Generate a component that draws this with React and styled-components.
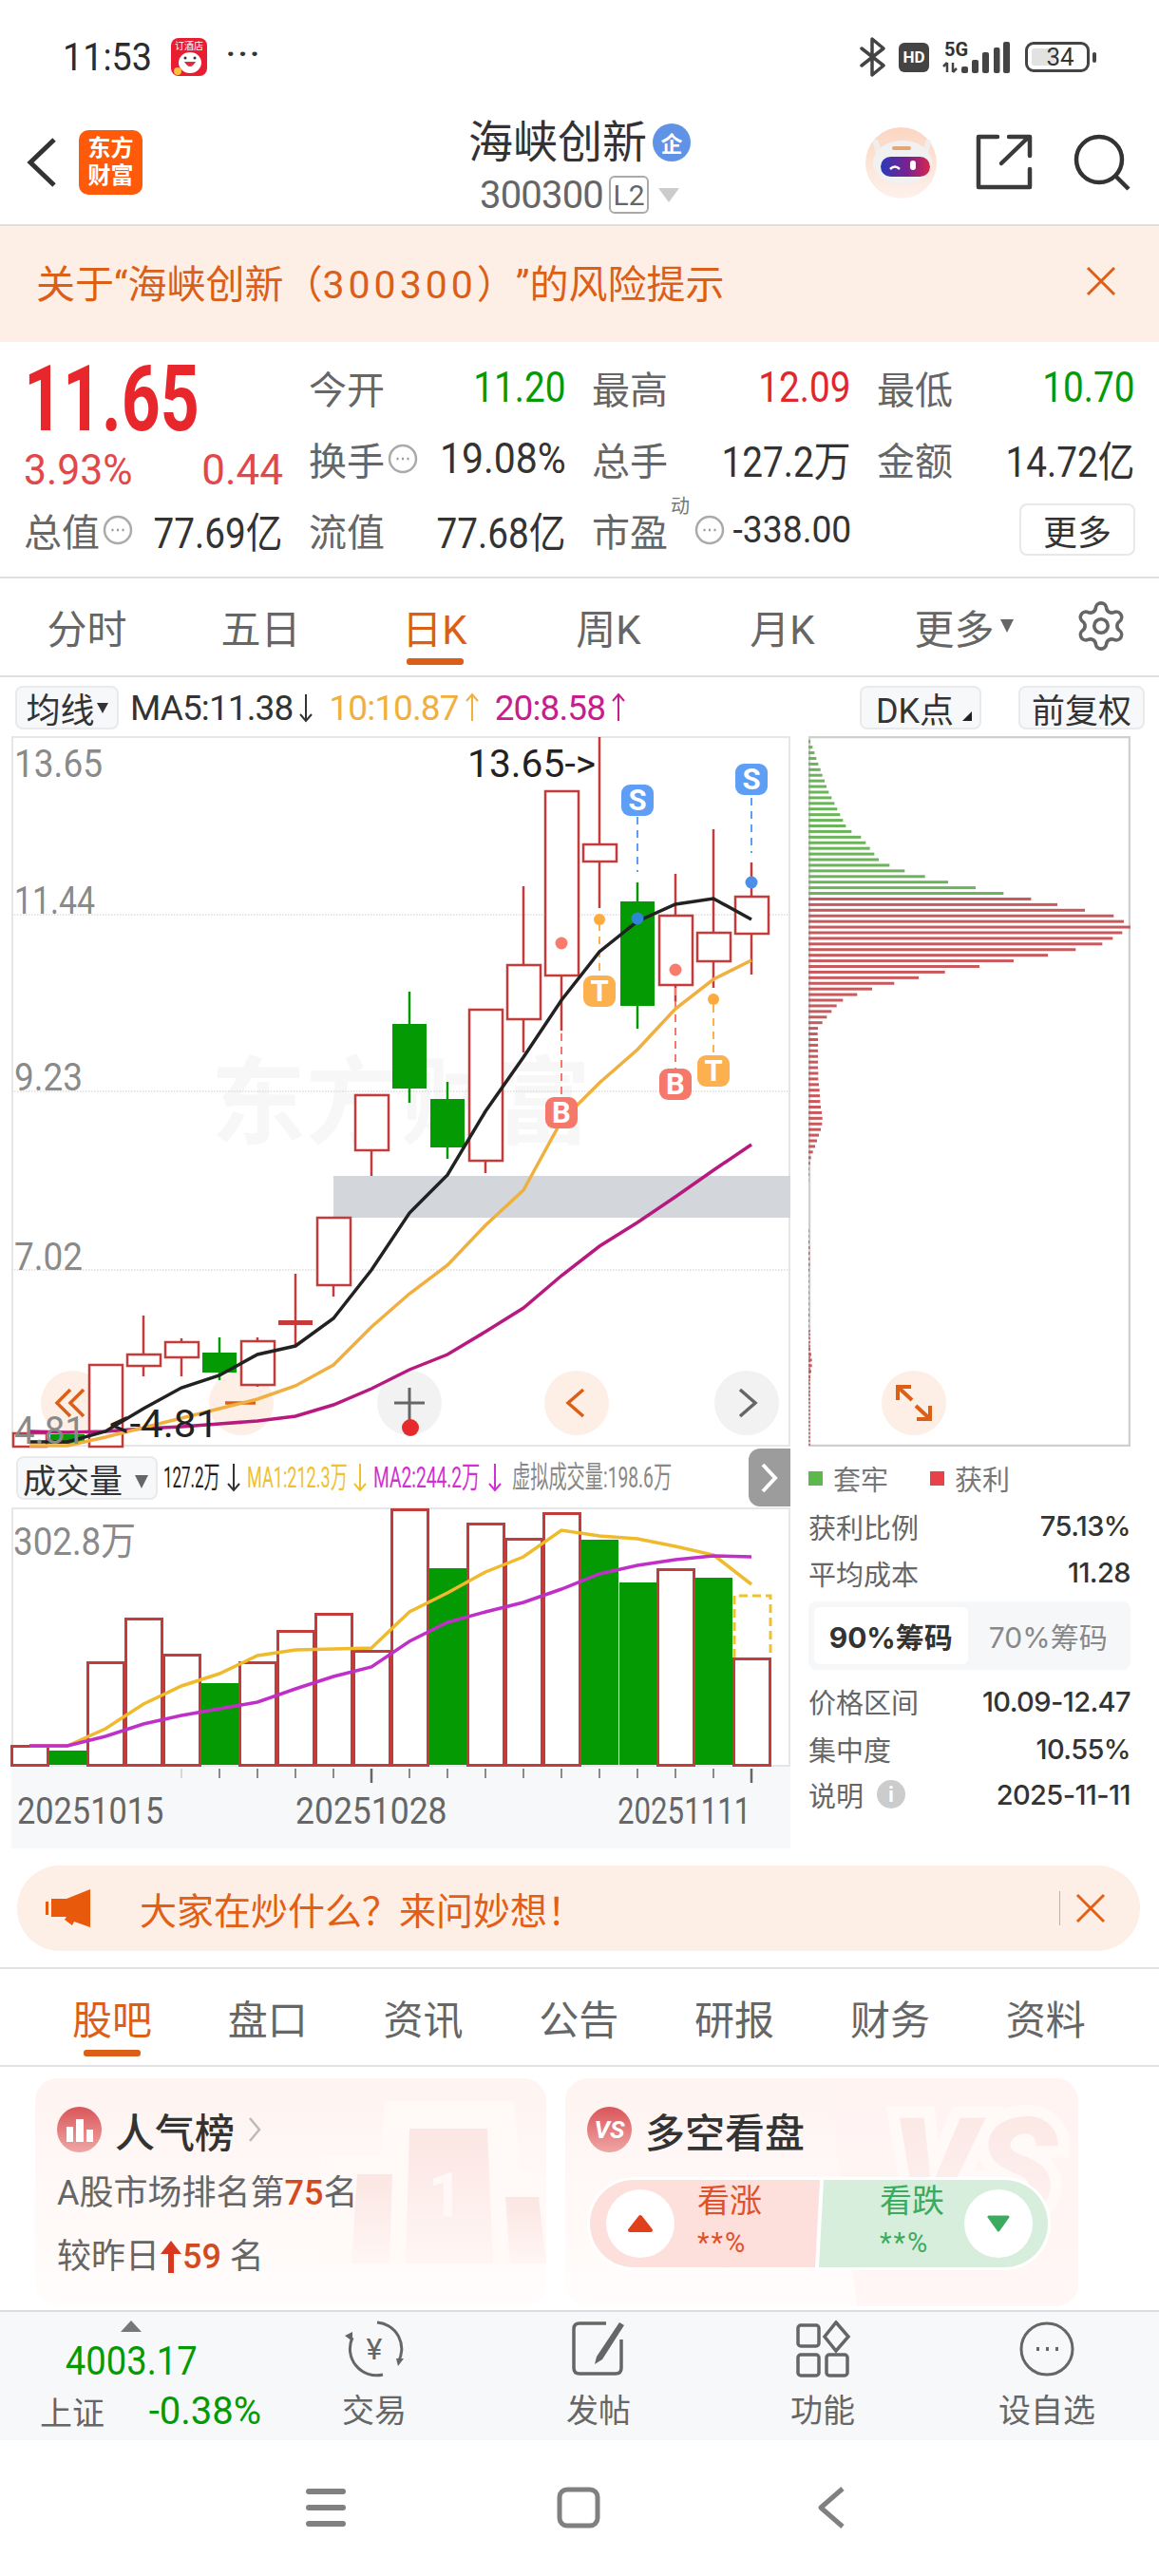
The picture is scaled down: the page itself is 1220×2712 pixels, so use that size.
import React from 'react';
import styled, { createGlobalStyle } from 'styled-components';
import { Settings } from 'lucide-react';

const SANS = 'Roboto, "Noto Sans CJK SC", sans-serif';
const ORANGE = '#dc5f17';
const RED = '#c33b3b';
const GREEN = '#049a04';

const Global = createGlobalStyle`
  html, body { margin: 0; padding: 0; background: #fff; }
  body { font-family: ${SANS}; color: #333; }
  * { box-sizing: border-box; }
`;

const Page = styled.div`
  width: 1220px;
  height: 2712px;
  overflow: hidden;
  background: #fff;
`;

/* status bar */
const StatusBar = styled.div`
  height: 100px;
  padding: 20px 65px 0 66px;
  display: flex;
  align-items: center;
`;
const Clock = styled.span`
  font-size: 41px;
  color: #2c2c2c;
  width: 114px;
  display: inline-block;
  transform: scaleX(.92);
  transform-origin: left center;
`;
const Dots = styled.span`
  margin-left: 20px;
  font-size: 32px;
  letter-spacing: 3px;
  font-weight: 700;
  line-height: 1;
  margin-top: -8px;
`;
const StatusRight = styled.div`
  margin-left: auto;
  display: flex;
  align-items: center;
  gap: 14px;
`;
const HdTag = styled.span`
  width: 32px;
  height: 31px;
  border-radius: 6px;
  background: #444;
  color: #fff;
  font-size: 17px;
  font-weight: 700;
  display: flex;
  align-items: center;
  justify-content: center;
`;
const Battery = styled.div`
  width: 68px;
  height: 32px;
  border: 3px solid #444;
  border-radius: 9px;
  display: flex;
  align-items: center;
  justify-content: center;
  font-size: 26px;
  color: #333;
  position: relative;
  margin: 0 8px 0 1px;
  padding-left: 6px;
  &::before {
    content: '';
    position: absolute;
    left: 4px;
    top: 4px;
    bottom: 4px;
    width: 25px;
    border-radius: 3px;
    background: #e2e2e2;
  }
  span { position: relative; }
  &::after {
    content: '';
    position: absolute;
    right: -10px;
    top: 8px;
    width: 4px;
    height: 11px;
    border-radius: 2px;
    background: #444;
  }
`;
const SignalIcon = styled.svg`
  overflow: visible;
`;

/* header */
const Header = styled.div`
  height: 138px;
  border-bottom: 2px solid #dfdfdf;
  display: grid;
  grid-template-columns: 1fr auto 1fr;
`;
const HeaderLeft = styled.div`
  padding: 6px 0 0 28px;
  display: flex;
  align-items: center;
  gap: 23px;
`;
const Logo = styled.div`
  width: 67px;
  height: 68px;
  border-radius: 10px;
  background: #ff5a0a;
  color: #fff;
  font-size: 24px;
  font-weight: 700;
  line-height: 29px;
  text-align: center;
  padding-top: 5px;
`;
const HeaderMid = styled.div`
  display: flex;
  flex-direction: column;
  align-items: center;
  padding-top: 25px;
`;
const TitleRow = styled.div`
  display: flex;
  align-items: center;
  gap: 6px;
  height: 50px;
`;
const Title = styled.span`
  font-size: 47px;
  line-height: 50px;
  color: #333;
`;
const QiBadge = styled.span`
  width: 40px;
  height: 40px;
  border-radius: 50%;
  background: #6092e6;
  color: #fff;
  font-size: 23px;
  font-weight: 700;
  display: flex;
  align-items: center;
  justify-content: center;
`;
const CodeRow = styled.div`
  display: flex;
  align-items: center;
  margin-top: 10px;
  height: 40px;
  color: #666;
`;
const Code = styled.span`
  font-size: 40px;
  letter-spacing: -.8px;
`;
const L2Tag = styled.span`
  margin-left: 6px;
  width: 42px;
  height: 40px;
  border: 2px solid #aaa;
  border-radius: 6px;
  font-size: 30px;
  display: flex;
  align-items: center;
  justify-content: center;
`;
const Caret = styled.span`
  display: inline-block;
  border-left: ${p => p.$w / 2}px solid transparent;
  border-right: ${p => p.$w / 2}px solid transparent;
  border-top: ${p => p.$h}px solid ${p => p.$c};
  ${p => p.$up && `transform: rotate(180deg);`}
  margin-left: ${p => p.$ml || 0}px;
`;
const HeaderRight = styled.div`
  padding: 6px 30px 0 0;
  display: flex;
  align-items: center;
  justify-content: flex-end;
`;
const IconSlot = styled.span`
  display: flex;
  margin-left: ${p => p.$ml || 0}px;
`;

/* notice */
const Notice = styled.div`
  height: 122px;
  background: #fdeee6;
  display: flex;
  align-items: center;
  justify-content: space-between;
  padding: 0 45px 6px 38px;
  color: ${ORANGE};
  font-size: 41px;
  text-spacing-trim: space-all;
  i { font-style: normal; letter-spacing: 4px; }
`;

/* quote */
const Quote = styled.div`
  height: 249px;
  border-bottom: 2px solid #dfdfdf;
  padding: 10px 25px 0 25px;
  display: grid;
  grid-template-columns: 300px 298px 300px 1fr;
  grid-template-rows: repeat(3, 75px);
`;
const PriceBlock = styled.div`
  grid-row: 1 / 3;
  padding-right: 27px;
  display: flex;
  flex-direction: column;
`;
const Price = styled.div`
  height: 100px;
  line-height: 100px;
  font-size: 96px;
  font-weight: 700;
  color: #e8272c;
  transform: scaleX(.745);
  transform-origin: left center;
`;
const Change = styled.div`
  height: 50px;
  display: flex;
  align-items: center;
  justify-content: space-between;
`;
const Cell = styled.div`
  display: flex;
  align-items: center;
  justify-content: space-between;
  padding-right: ${p => p.$last ? 0 : 27}px;
`;
const Label = styled.span`
  font-size: 40px;
  color: #666;
  display: flex;
  align-items: center;
  white-space: nowrap;
  position: relative;
`;
const Num = styled.span`
  display: inline-block;
  font-size: ${p => p.$fs || 44}px;
  color: ${p => p.$c || '#333'};
  transform: scaleX(${p => p.$sx || .88});
  transform-origin: ${p => p.$left ? 'left' : 'right'} center;
  white-space: nowrap;
`;
const Dyn = styled.span`
  position: absolute;
  left: 83px;
  top: -12px;
  font-size: 20px;
  color: #777;
`;
const MoreBtn = styled.div`
  width: 122px;
  height: 55px;
  margin-left: auto;
  border: 2px solid #e8e8e8;
  border-radius: 8px;
  font-size: 36px;
  display: flex;
  align-items: center;
  justify-content: center;
`;

/* k tabs */
const KTabs = styled.div`
  height: 104px;
  border-bottom: 2px solid #dfdfdf;
  display: grid;
  grid-template-columns: repeat(6, 183px) 1fr;
  align-items: center;
  padding-bottom: 2px;
`;
const Tab = styled.div`
  height: 100%;
  display: flex;
  align-items: center;
  justify-content: center;
  font-size: ${p => p.$fs || 42}px;
  color: ${p => p.$on ? ORANGE : '#666'};
  position: relative;
  ${p => p.$on && `
    &::after {
      content: '';
      position: absolute;
      left: 50%;
      bottom: ${p.$bar}px;
      width: 60px;
      margin-left: -30px;
      height: 7px;
      border-radius: 3px;
      background: ${ORANGE};
    }
  `}
`;
const GearSlot = styled.div`
  display: flex;
  justify-content: center;
`;

/* indicators */
const IndBar = styled.div`
  height: 62px;
  padding: 2px 15px 0 16px;
  display: flex;
  align-items: center;
`;
const SoftBtn = styled.div`
  height: 46px;
  border: 2px solid #e9eaec;
  border-radius: 8px;
  background: #f7f8fa;
  display: flex;
  align-items: center;
  justify-content: center;
  position: relative;
  color: #333;
  font-size: ${p => p.$fs || 36}px;
  width: ${p => p.$w}px;
  margin-left: ${p => p.$ml || 0}px;
  flex: none;
`;
const MaText = styled.span`
  font-size: 37px;
  color: ${p => p.$c};
  white-space: nowrap;
  margin-left: ${p => p.$ml || 0}px;
  letter-spacing: -.9px;
`;
const CornerMark = styled.span`
  position: absolute;
  right: 8px;
  bottom: 7px;
  width: 0;
  height: 0;
  border-left: 10px solid transparent;
  border-bottom: 10px solid #222;
`;

/* chart area */
const Charts = styled.div`
  height: 1171px;
  display: flex;
  padding-left: 12px;
`;
const LeftCol = styled.div`
  width: 820px;
`;
const RightCol = styled.div`
  width: 339px;
  margin-left: 19px;
`;
const Panel = styled.div`
  width: 820px;
  height: ${p => p.$h}px;
  border: 2px solid #e6e6e6;
  svg { display: block; margin: -2px; overflow: visible; }
`;
const ChartText = styled.text`
  font-family: ${SANS};
  font-size: ${p => p.$fs || 41}px;
  fill: ${p => p.$c || '#8a8a8a'};
  font-weight: ${p => p.$w || 400};
  text-anchor: ${p => p.$a || 'start'};
`;
const VolHead = styled.div`
  height: 64px;
  display: flex;
  align-items: flex-start;
`;
const VolBtn = styled(SoftBtn)`
  width: 149px;
  margin: 10px 6px 0 5px;
  justify-content: flex-start;
  padding-left: 5px;
  font-size: 35px;
  span { position: absolute; right: 8px; top: 18px; }
`;
const Squeeze = styled.span`
  width: ${p => p.$w}px;
  flex: none;
  font-size: 32px;
  line-height: 64px;
  white-space: nowrap;
  color: ${p => p.$c};
  display: inline-block;
  transform: scaleX(${p => p.$sx});
  transform-origin: left center;
`;
const ArrowSlot = styled.span`
  display: flex;
  height: 64px;
  align-items: center;
  margin: 0 ${p => p.$mr || 7}px 0 7px;
`;
const GrayTab = styled.div`
  margin: 2px 0 0 auto;
  width: 44px;
  height: 61px;
  background: #9c9c9c;
  border-radius: 12px 0 0 12px;
  display: flex;
  align-items: center;
  justify-content: center;
`;
const DateAxis = styled.div`
  height: 86px;
  background: #f7f8fa;
  position: relative;
  svg { display: block; }
`;
const DateRow = styled.div`
  display: grid;
  grid-template-columns: 293px 339px 1fr;
  padding-left: 6px;
  margin-top: 2px;
`;

/* chip side */
const Legend = styled.div`
  margin-top: 18px;
  height: 30px;
  display: flex;
  align-items: center;
  font-size: 29px;
  color: #777;
`;
const Swatch = styled.i`
  width: 15px;
  height: 15px;
  background: ${p => p.$c};
  margin: 0 11px 0 ${p => p.$ml || 0}px;
`;
const InfoRow = styled.div`
  height: ${p => p.$h || 49}px;
  margin-top: ${p => p.$mt || 0}px;
  display: flex;
  align-items: center;
  justify-content: space-between;
  font-size: 29px;
  color: #666;
  b { font-family: Inter, sans-serif; font-weight: 500; font-size: 29px; color: #333; letter-spacing: -.6px; }
`;
const Toggle = styled.div`
  height: 72px;
  margin-top: 6px;
  background: #f6f7f9;
  border-radius: 8px;
  padding: 6px;
  display: flex;
  font-size: 30px;
`;
const ToggleItem = styled.div`
  width: 163px;
  border-radius: 6px;
  display: flex;
  align-items: center;
  justify-content: center;
  background: ${p => p.$on ? '#fff' : 'transparent'};
  font-weight: ${p => p.$on ? 700 : 400};
  color: ${p => p.$on ? '#333' : '#888'};
  margin-left: ${p => p.$on ? 0 : 4}px;
  font-family: Inter, "Noto Sans CJK SC", sans-serif;
`;
const InfoI = styled.span`
  display: inline-flex;
  width: 30px;
  height: 30px;
  border-radius: 50%;
  background: #ccc;
  color: #fff;
  font-size: 22px;
  font-weight: 700;
  align-items: center;
  justify-content: center;
  margin-left: 14px;
`;
const InfoLabel = styled.span`
  display: flex;
  align-items: center;
`;

/* ask pill */
const AskPill = styled.div`
  height: 90px;
  margin: 18px 20px 17px 18px;
  border-radius: 45px;
  background: #fdeee6;
  display: flex;
  align-items: center;
  padding: 0 35px 0 30px;
  color: #e25f15;
  font-size: 39px;
`;
const AskText = styled.span`
  margin-left: 52px;
`;
const AskClose = styled.span`
  margin-left: auto;
  display: flex;
  align-items: center;
  border-left: 1px solid #e7a57f;
  padding-left: 16px;
  height: 36px;
  position: relative;
  left: -1px;
`;

/* stock tabs */
const StockTabs = styled.div`
  height: 105px;
  border-top: 2px solid #e2e2e2;
  border-bottom: 2px solid #e2e2e2;
  display: grid;
  grid-template-columns: repeat(7, 163.8px);
  padding: 0 0 0 36px;
`;

/* cards */
const Cards = styled.div`
  height: 258px;
  padding: 12px 0 0 37px;
  display: flex;
  gap: 20px;
  border-bottom: 2px solid #dcdde2;
`;
const Card = styled.div`
  width: ${p => p.$w}px;
  height: 240px;
  border-radius: 24px;
  background: linear-gradient(180deg, #fef4f2 0%, #fff9f7 55%, #fffdfc 100%);
  padding: 30px 23px 0;
  position: relative;
  overflow: hidden;
`;
const CardArt = styled.svg`
  position: absolute;
  right: 0;
  top: 0;
`;
const CardHead = styled.div`
  display: flex;
  align-items: center;
  height: 48px;
  gap: 14px;
  font-size: 42px;
  font-weight: 500;
  color: #333;
  position: relative;
`;
const Medal = styled.span`
  width: 47px;
  height: 48px;
  border-radius: 50%;
  background: linear-gradient(180deg, #d9565a, #f0a5a5);
  color: #fff;
  display: flex;
  align-items: center;
  justify-content: center;
  font-size: 26px;
  font-weight: 700;
  font-style: italic;
  flex: none;
`;
const RankLine = styled.div`
  position: relative;
  font-size: 36px;
  color: #666;
  margin-top: ${p => p.$mt}px;
  height: 50px;
  line-height: 50px;
  display: flex;
  align-items: center;
  white-space: nowrap;
  em { font-style: normal; color: #d24a1e; font-weight: 500; }
`;
const Vote = styled.div`
  position: relative;
  margin: 26px 0 0 0;
  width: 488px;
  height: 98px;
  padding: 3px;
  background: #fff;
  border-radius: 49px;
  display: flex;
`;
const VoteSide = styled.div`
  flex: 1;
  height: 92px;
  background: ${p => p.$up ? '#fddfdb' : '#d7eedd'};
  border-radius: ${p => p.$up ? '46px 0 0 46px' : '0 46px 46px 0'};
  clip-path: ${p => p.$up
    ? 'polygon(0 0, 100% 0, calc(100% - 5px) 100%, 0 100%)'
    : 'polygon(5px 0, 100% 0, 100% 100%, 0 100%)'};
  margin-left: ${p => p.$up ? 0 : -1}px;
  display: flex;
  flex-direction: ${p => p.$up ? 'row' : 'row-reverse'};
  align-items: center;
  color: ${p => p.$up ? '#e0512b' : '#3cab60'};
  padding: ${p => p.$up ? '0 0 0 17px' : '0 16px 0 0'};
`;
const VoteKnob = styled.span`
  width: 72px;
  height: 72px;
  border-radius: 50%;
  background: #fff;
  display: flex;
  align-items: center;
  justify-content: center;
  flex: none;
`;
const VoteText = styled.div`
  margin: ${p => p.$up ? '-4px 0 0 24px' : '-4px 19px 0 0'};
  width: 70px;
  font-size: 34px;
  line-height: 44px;
  small { display: block; font-size: 29px; letter-spacing: 2px; }
`;

/* bottom bar */
const BottomBar = styled.div`
  height: 135px;
  background: #f7f8fa;
  display: grid;
  grid-template-columns: 276px repeat(4, 236px);
`;
const Market = styled.div`
  display: flex;
  flex-direction: column;
  align-items: center;
  padding-top: 9px;
`;
const MarketRow = styled.div`
  display: flex;
  align-items: center;
  justify-content: space-between;
  align-self: flex-start;
  width: 233px;
  margin-left: 42px;
  font-size: 34px;
  color: #666;
`;
const NavItem = styled.div`
  display: flex;
  flex-direction: column;
  align-items: center;
  padding-top: 9px;
  font-size: 34px;
  color: #666;
  span { margin-top: 13px; line-height: 44px; }
  svg { display: block; }
`;
const SysNav = styled.div`
  height: 142px;
  display: flex;
  align-items: center;
  justify-content: center;
  padding-left: 24px;
  svg { display: block; }
`;

/* chart data, page coordinates */
const X = i => 31 + 40 * i;
const candles = [
  [1509, 1523, 1509, 1523, 'u'], [1510, 1520, 1510, 1520, 'd'], [1437, 1523, 1437, 1523, 'u'], [1426, 1438, 1385, 1449, 'u'],
  [1413, 1429, 1409, 1449, 'u'], [1424, 1445, 1408, 1453, 'd'], [1412, 1458, 1408, 1460, 'u'], [1390, 1395, 1341, 1417, 'f'],
  [1282, 1353, 1282, 1365, 'u'], [1153, 1211, 1153, 1238, 'u'], [1078, 1146, 1044, 1161, 'd'], [1157, 1208, 1139, 1220, 'd'],
  [1063, 1222, 1063, 1235, 'u'], [1016, 1073, 933, 1108, 'u'], [833, 1027, 833, 1085, 'u'], [889, 907, 776, 956, 'u'],
  [949, 1059, 929, 1083, 'd'], [964, 1037, 920, 1055, 'u'], [982, 1012, 873, 1040, 'u'], [944, 983, 908, 1026, 'u'],
];
const ma5 = [1518, 1518, 1507, 1483, 1461, 1448, 1426, 1417, 1388, 1337, 1277, 1237, 1170, 1113, 1053, 1002, 970, 952, 946, 968];
const ma10 = [1522, 1522, 1513, 1503, 1493, 1483, 1473, 1459, 1437, 1397, 1362, 1332, 1290, 1253, 1180, 1140, 1105, 1062, 1031, 1011];
const ma20 = [1507, 1508, 1507, 1504, 1502, 1499, 1496, 1491, 1479, 1462, 1442, 1426, 1402, 1377, 1343, 1312, 1287, 1260, 1232, 1205];
const volTops = [1837, 1843, 1749, 1703, 1741, 1772, 1749, 1716, 1698, 1737, 1588, 1651, 1603, 1619, 1592, 1621, 1666, 1651, 1661, 1745];
const volGreen = [1, 5, 11, 15, 16, 18];
const ma1 = [1838, 1838, 1820, 1794, 1775, 1762, 1743, 1737, 1736, 1735, 1697, 1677, 1655, 1639, 1611, 1617, 1620, 1628, 1637, 1668];
const ma2 = [1838, 1838, 1828, 1815, 1806, 1799, 1792, 1778, 1765, 1755, 1728, 1708, 1697, 1687, 1673, 1657, 1648, 1642, 1638, 1639];
const line = ys => ys.map((y, i) => `${X(i)},${y}`).join(' ');

const greenEnds = [98, 105, 111, 117, 123, 130, 136, 143, 149, 156, 165, 174, 183, 192, 201, 210, 228, 258, 273, 286, 300, 314, 348, 396, 460, 533, 620, 708];
const redEnds = [795, 878, 965, 1056, 1088, 1110, 1083, 1053, 1020, 936, 848, 740, 632, 523, 440, 363, 293, 246, 201, 181, 165, 150, 136, 122, 121, 122, 122, 122, 122, 122, 122, 123, 123, 125, 127, 128, 129, 131, 134, 136, 135, 131, 125, 119, 113, 106, 100, 97];
const lowEnds = [94, 94, 93, 0, 0, 0, 0, 0, 0, 0, 0, 94, 94, 95, 96, 96, 96, 96, 95, 94, 94, 94, 94, 94, 94, 94, 95, 94, 94, 94, 94, 94, 98, 101, 103, 103, 101, 98, 94, 94, 94, 94];

function Candle({ c, i }) {
  const [top, bot, hi, lo, kind] = c;
  const x = X(i);
  const col = kind === 'd' ? GREEN : RED;
  return (
    <g>
      <line x1={x} x2={x} y1={hi} y2={lo} stroke={col} strokeWidth="2.5" />
      {kind === 'u'
        ? <rect x={x - 17} y={top} width="35" height={bot - top} fill="#fff" stroke={col} strokeWidth="2.5" />
        : <rect x={x - 18} y={top} width="36" height={bot - top} fill={col} />}
    </g>
  );
}

function Signal({ x, y, t, c }) {
  return (
    <g>
      <rect x={x - 17} y={y} width="34" height="33" rx="9" fill={c} />
      <ChartText x={x} y={y + 27} $fs={31} $c="#fff" $w={700} $a="middle">{t}</ChartText>
    </g>
  );
}

function Drop({ x, y1, y2, c }) {
  return <line x1={x} x2={x} y1={y1} y2={y2} stroke={c} strokeWidth="2" strokeDasharray="8 6" />;
}

const Axis = ({ x, y, w, c, children }) => (
  <ChartText x={x} y={y} $c={c} textLength={w} lengthAdjust="spacingAndGlyphs">{children}</ChartText>
);

function KChart() {
  const tint = '#fdeee6';
  const grey = '#f2f2f2';
  return (
    <svg width="820" height="748" viewBox="12 775 820 748">
      <ChartText x={222} y={1196} $fs={100} $c="#f7f7f7" $w={700}>东方财富</ChartText>
      {[963, 1149, 1337].map(y => <line key={y} x1="12" x2="832" y1={y} y2={y} stroke="#ddd" strokeWidth="1.5" strokeDasharray="1.5 1.5" />)}
      <rect x="351" y="1238" width="481" height="44" fill="#d3d6da" />
      <circle cx="77" cy="1477" r="34" fill={tint} />
      <circle cx="254" cy="1477" r="34" fill={tint} />
      <circle cx="431" cy="1477" r="34" fill={grey} />
      <circle cx="607" cy="1477" r="34" fill={tint} />
      <circle cx="786" cy="1477" r="34" fill={grey} />
      <path d="M74 1463l-14 14 14 14M88 1463l-14 14 14 14" fill="none" stroke={ORANGE} strokeWidth="3.5" />
      <path d="M237 1477h32" stroke={ORANGE} strokeWidth="3.5" />
      <path d="M415 1477h32M431 1461v42" stroke="#666" strokeWidth="3" />
      <circle cx="432" cy="1503" r="9" fill="#e52b2b" />
      <path d="M614 1463l-16 14 16 14" fill="none" stroke={ORANGE} strokeWidth="3.5" />
      <path d="M779 1463l16 14-16 14" fill="none" stroke="#666" strokeWidth="3.5" />
      {candles.map((c, i) => <Candle key={i} c={c} i={i} />)}
      <Drop x={671} y1={860} y2={918} c="#5e9ff5" />
      <Drop x={791} y1={840} y2={898} c="#5e9ff5" />
      <Drop x={631} y1={972} y2={1027} c="#fdb04e" />
      <Drop x={751} y1={1058} y2={1111} c="#fdb04e" />
      <Drop x={711} y1={1040} y2={1125} c="#f5786a" />
      <Drop x={591} y1={1088} y2={1155} c="#f5786a" />
      <polyline points={line(ma20)} fill="none" stroke="#b7197f" strokeWidth="3.5" />
      <polyline points={line(ma10)} fill="none" stroke="#f0b040" strokeWidth="3.5" />
      <polyline points={line(ma5)} fill="none" stroke="#222" strokeWidth="3.5" />
      <circle cx="671" cy="967" r="6.5" fill="#2f86d6" />
      <circle cx="791" cy="929" r="6.5" fill="#4d8ee8" />
      <circle cx="631" cy="968" r="6" fill="#fdaa3e" />
      <circle cx="751" cy="1052" r="6" fill="#fdaa3e" />
      <circle cx="591" cy="993" r="6.5" fill="#f87c6e" />
      <circle cx="711" cy="1021" r="6.5" fill="#f87c6e" />
      <Signal x={671} y={826} t="S" c="#5e9ff5" />
      <Signal x={791} y={804} t="S" c="#5e9ff5" />
      <Signal x={631} y={1027} t="T" c="#fdb04e" />
      <Signal x={751} y={1111} t="T" c="#fdb04e" />
      <Signal x={711} y={1125} t="B" c="#f5786a" />
      <Signal x={591} y={1155} t="B" c="#f5786a" />
      <Axis x={15} y={818} w={93}>13.65</Axis>
      <Axis x={15} y={962} w={85}>11.44</Axis>
      <Axis x={15} y={1148} w={72}>9.23</Axis>
      <Axis x={15} y={1337} w={72}>7.02</Axis>
      <Axis x={15} y={1520} w={75}>4.81</Axis>
      <Axis x={492} y={818} w={135} c="#222">13.65-&gt;</Axis>
      <Axis x={115} y={1513} w={115} c="#222">&lt;-4.81</Axis>
    </svg>
  );
}

function ChipChart() {
  const row = k => 780.7 + k * 5.92;
  const bar = (end, k, c) => end > 0 && (
    <rect key={k} x="851" y={row(k) - 1.5} width={(end - 92) / 3} height="3" fill={c} />
  );
  return (
    <svg width="339" height="748" viewBox="851 775 339 748" style={{ display: 'block' }}>
      <path d="M852 776H1189V1522H852Z" fill="none" stroke="#cfcfcf" strokeWidth="2.5" />
      <circle cx="962" cy="1477" r="34" fill="#fdeee6" />
      <path d="M945 1474v-14h14M946 1461l14 13M979 1480v14h-14M978 1493l-14-13" fill="none" stroke={ORANGE} strokeWidth="4" />
      {greenEnds.map((e, k) => bar(e, k, '#6cb45a'))}
      {redEnds.map((e, k) => bar(e, k + 28, '#c85a5e'))}
      {lowEnds.map((e, k) => bar(e, k + 76, '#c85a5e'))}
      <line x1="852" x2="852" y1="1400" y2="1522" stroke="#c85a5e" strokeWidth="1.5" strokeDasharray="2 2" />
    </svg>
  );
}

function VolChart() {
  return (
    <svg width="820" height="273" viewBox="12 1587 820 273">
      {volTops.map((t, i) => volGreen.includes(i)
        ? <rect key={i} x={X(i) - 19} y={t} width="39" height={1858 - t} fill={GREEN} />
        : <rect key={i} x={X(i) - 18.5} y={t + 1.5} width="38" height={1857 - t} fill="#fff" stroke={RED} strokeWidth="3" />)}
      <path d="M773 1745V1680H811V1745" fill="none" stroke="#efc12e" strokeWidth="3" strokeDasharray="9 5" />
      <polyline points={line(ma1)} fill="none" stroke="#efba2c" strokeWidth="3.5" />
      <polyline points={line(ma2)} fill="none" stroke="#c030c8" strokeWidth="3.5" />
      <Axis x={14} y={1637} w={129}>302.8万</Axis>
    </svg>
  );
}

function DateTicks() {
  return (
    <svg width="820" height="22" viewBox="12 1860 820 22">
      {candles.map((c, i) => {
        if (i < 4) return null;
        const big = i === 9 || i === 19;
        return <line key={i} x1={X(i)} x2={X(i)} y1="1862" y2={big ? 1877 : 1872} stroke={i === 4 ? '#ccc' : '#666'} strokeWidth={big ? 2.5 : 1.5} />;
      })}
    </svg>
  );
}

const Arrow = ({ c, up }) => (
  <svg width="14" height="32" viewBox="0 0 14 32">
    <path d={up ? 'M7 30V3M1 9l6-7 6 7' : 'M7 2v27M1 23l6 7 6-7'} fill="none" stroke={c} strokeWidth="2" />
  </svg>
);

const DotsInfo = () => (
  <svg width="32" height="32" viewBox="0 0 32 32" style={{ marginLeft: 3 }}>
    <circle cx="16" cy="16" r="14" fill="none" stroke="#aaa" strokeWidth="2.5" />
    <path d="M9.5 16h2M15 16h2M20.5 16h2" stroke="#999" strokeWidth="2.5" />
  </svg>
);

const CloseX = ({ size = 32, c = ORANGE, w = 3 }) => (
  <svg width={size} height={size} viewBox="0 0 32 32">
    <path d="M2 2L30 30M30 2L2 30" stroke={c} strokeWidth={w} />
  </svg>
);

const quoteRows = [
  { l: '今开', v: '11.20', c: GREEN },
  { l: '最高', v: '12.09', c: '#e2272c' },
  { l: '最低', v: '10.70', c: GREEN, last: true },
  { l: '换手', v: '19.08%', i: true, sx: .93 },
  { l: '总手', v: '127.2万' },
  { l: '金额', v: '14.72亿', last: true },
];

const stockTabs = ['股吧', '盘口', '资讯', '公告', '研报', '财务', '资料'];

export default function App() {
  return (
    <Page>
      <Global />
      <StatusBar>
        <Clock>11:53</Clock>
        <svg width="38" height="40" viewBox="0 0 38 40">
          <rect width="38" height="40" rx="8" fill="#ea1c32" />
          <text x="19" y="12" fontSize="10" fill="#fff" textAnchor="middle" fontFamily="Noto Sans CJK SC">订酒店</text>
          <ellipse cx="20" cy="26" rx="12" ry="11" fill="#fff" />
          <path d="M14 25q6 10 12 0z" fill="#e5263c" />
          <circle cx="15" cy="21" r="1.5" fill="#333" />
          <circle cx="25" cy="21" r="1.5" fill="#333" />
          <circle cx="7" cy="35" r="4" fill="#f8c33a" />
        </svg>
        <Dots>···</Dots>
        <StatusRight>
          <svg width="27" height="42" viewBox="0 0 27 42">
            <path d="M2 12L25 30L13 40V2L25 12L2 30" fill="none" stroke="#444" strokeWidth="3.5" strokeLinejoin="round" strokeLinecap="round" />
          </svg>
          <HdTag>HD</HdTag>
          <SignalIcon width="72" height="36" viewBox="0 0 72 36">
            <text x="2" y="17" fontSize="20" fontWeight="700" fill="#333" fontFamily="Roboto">5G</text>
            <path d="M5 24v10M1 28l4-4M11 34V24M15 30l-4 4" stroke="#444" strokeWidth="2.5" fill="none" />
            <g fill="#444">
              <rect x="20" y="28" width="7" height="7" rx="2" />
              <rect x="31" y="21" width="7" height="14" rx="2" />
              <rect x="42" y="13" width="7" height="22" rx="2" />
              <rect x="54" y="8" width="6.5" height="27" rx="2" />
              <rect x="64" y="2" width="7" height="33" rx="2" />
            </g>
          </SignalIcon>
          <Battery><span>34</span></Battery>
        </StatusRight>
      </StatusBar>

      <Header>
        <HeaderLeft>
          <svg width="32" height="54" viewBox="0 0 32 54">
            <path d="M29 3L4 27L29 51" fill="none" stroke="#333" strokeWidth="5" />
          </svg>
          <Logo>东方<br />财富</Logo>
        </HeaderLeft>
        <HeaderMid>
          <TitleRow>
            <Title>海峡创新</Title>
            <QiBadge>企</QiBadge>
          </TitleRow>
          <CodeRow>
            <Code>300300</Code>
            <L2Tag>L2</L2Tag>
            <Caret $w={23} $h={15} $c="#ccc" $ml={10} />
          </CodeRow>
        </HeaderMid>
        <HeaderRight>
          <svg width="75" height="75" viewBox="0 0 75 75">
            <defs>
              <linearGradient id="haloG" x1="0" y1="0" x2="0" y2="1">
                <stop offset="0" stopColor="#fbd6c2" />
                <stop offset="1" stopColor="#fdf2ec" />
              </linearGradient>
              <linearGradient id="visorG" x1="0" y1="0" x2="1" y2="0">
                <stop offset="0" stopColor="#2b3ab8" />
                <stop offset=".55" stopColor="#7a218f" />
                <stop offset="1" stopColor="#d7264a" />
              </linearGradient>
            </defs>
            <circle cx="37.5" cy="37.5" r="37.5" fill="url(#haloG)" />
            <path d="M11 16l4 14M66 16l-4 14" stroke="#f1efee" strokeWidth="6" strokeLinecap="round" />
            <ellipse cx="39" cy="37" rx="31" ry="23" fill="#f2f1f2" />
            <rect x="28" y="20" width="20" height="4" rx="2" fill="#e0a877" />
            <rect x="16" y="31" width="52" height="21" rx="10.5" fill="url(#visorG)" />
            <path d="M26 44q5-5 10 0" stroke="#fff" strokeWidth="2.5" fill="none" />
            <rect x="47" y="35" width="6" height="10" rx="3" fill="#fff" />
          </svg>
          <IconSlot $ml={41}>
            <svg width="60" height="60" viewBox="0 0 60 60">
              <path d="M23 3H3V56H57V37" fill="none" stroke="#3a3a3a" strokeWidth="4.5" strokeLinecap="round" strokeLinejoin="round" />
              <path d="M27 31L55 4M35 3H57V23" fill="none" stroke="#3a3a3a" strokeWidth="4.5" strokeLinecap="round" strokeLinejoin="round" />
            </svg>
          </IconSlot>
          <IconSlot $ml={43}>
            <svg width="60" height="60" viewBox="0 0 60 60">
              <circle cx="27" cy="27" r="24" fill="none" stroke="#333" strokeWidth="4.5" />
              <path d="M44 44L58 58" stroke="#333" strokeWidth="4.5" />
            </svg>
          </IconSlot>
        </HeaderRight>
      </Header>

      <Notice>
        <span>关于“海峡创新（<i>300300</i>）”的风险提示</span>
        <CloseX />
      </Notice>

      <Quote>
        <PriceBlock>
          <Price>11.65</Price>
          <Change>
            <Num $c="#e2474a" $left $sx={.97}>3.93%</Num>
            <Num $c="#e2474a" $sx={1}>0.44</Num>
          </Change>
        </PriceBlock>
        {quoteRows.map(r => (
          <Cell key={r.l} $last={r.last} style={r.l === '换手' ? { gridColumn: 2, gridRow: 2 } : undefined}>
            <Label>{r.l}{r.i && <DotsInfo />}</Label>
            <Num $c={r.c} $sx={r.sx}>{r.v}</Num>
          </Cell>
        ))}
        <Cell>
          <Label>总值<DotsInfo /></Label>
          <Num>77.69亿</Num>
        </Cell>
        <Cell>
          <Label>流值</Label>
          <Num>77.68亿</Num>
        </Cell>
        <Cell>
          <Label>市盈<Dyn>动</Dyn><span style={{ width: 25 }} /><DotsInfo /></Label>
          <Num $fs={38} $sx={.98}>-338.00</Num>
        </Cell>
        <Cell $last>
          <MoreBtn>更多</MoreBtn>
        </Cell>
      </Quote>

      <KTabs>
        <Tab>分时</Tab>
        <Tab>五日</Tab>
        <Tab $on $bar={9}>日K</Tab>
        <Tab>周K</Tab>
        <Tab>月K</Tab>
        <Tab style={{ paddingLeft: 16 }}>更多<Caret $w={14} $h={14} $c="#666" $ml={6} /></Tab>
        <GearSlot><Settings size={58} color="#666" strokeWidth={1.5} /></GearSlot>
      </KTabs>

      <IndBar>
        <SoftBtn $w={109}>均线<Caret $w={12} $h={11} $c="#333" $ml={2} /></SoftBtn>
        <MaText $c="#333" $ml={12}>MA5:11.38</MaText>
        <ArrowSlot><Arrow c="#333" /></ArrowSlot>
        <MaText $c="#f0b040" $ml={10}>10:10.87</MaText>
        <ArrowSlot><Arrow c="#f0b040" up /></ArrowSlot>
        <MaText $c="#c81e8c" $ml={10}>20:8.58</MaText>
        <ArrowSlot><Arrow c="#c81e8c" up /></ArrowSlot>
        <SoftBtn $w={128} style={{ marginLeft: 'auto', paddingRight: 12 }}>DK点<CornerMark /></SoftBtn>
        <SoftBtn $w={133} $ml={39} $fs={35}>前复权</SoftBtn>
      </IndBar>

      <Charts>
        <LeftCol>
          <Panel $h={748}><KChart /></Panel>
          <VolHead>
            <VolBtn>成交量<Caret $w={14} $h={14} $c="#666" /></VolBtn>
            <Squeeze $w={60} $sx={.53} $c="#222">127.2万</Squeeze>
            <ArrowSlot><Arrow c="#333" /></ArrowSlot>
            <Squeeze $w={105} $sx={.565} $c="#efc12e">MA1:212.3万</Squeeze>
            <ArrowSlot><Arrow c="#efc12e" /></ArrowSlot>
            <Squeeze $w={114} $sx={.6} $c="#d030d0">MA2:244.2万</Squeeze>
            <ArrowSlot $mr={11}><Arrow c="#d030d0" /></ArrowSlot>
            <Squeeze $w={170} $sx={.6} $c="#888">虚拟成交量:198.6万</Squeeze>
            <GrayTab>
              <svg width="20" height="34" viewBox="0 0 20 34"><path d="M3 3L16 17L3 31" fill="none" stroke="#fff" strokeWidth="4" /></svg>
            </GrayTab>
          </VolHead>
          <Panel $h={273}><VolChart /></Panel>
          <DateAxis>
            <DateTicks />
            <DateRow>
              <span><Num $fs={39} $c="#666" $left $sx={.88}>20251015</Num></span>
              <span><Num $fs={39} $c="#666" $left $sx={.91}>20251028</Num></span>
              <span><Num $fs={39} $c="#666" $left $sx={.8}>20251111</Num></span>
            </DateRow>
          </DateAxis>
        </LeftCol>
        <RightCol>
          <ChipChart />
          <Legend>
            <Swatch $c="#5cb84a" />套牢
            <Swatch $c="#e84148" $ml={44} />获利
          </Legend>
          <InfoRow $mt={11}><span>获利比例</span><b>75.13%</b></InfoRow>
          <InfoRow><span>平均成本</span><b>11.28</b></InfoRow>
          <Toggle>
            <ToggleItem $on>90%筹码</ToggleItem>
            <ToggleItem>70%筹码</ToggleItem>
          </Toggle>
          <InfoRow $mt={8} $h={50}><span>价格区间</span><b>10.09-12.47</b></InfoRow>
          <InfoRow $h={50}><span>集中度</span><b>10.55%</b></InfoRow>
          <InfoRow $h={46}><InfoLabel>说明<InfoI>i</InfoI></InfoLabel><b>2025-11-11</b></InfoRow>
        </RightCol>
      </Charts>

      <AskPill>
        <svg width="47" height="40" viewBox="0 0 47 40">
          <path d="M0 13h3v14H0zM6 10h16L47 0V40L30 34 28 38 20 32 22 29H6z" fill="#e8590c" />
        </svg>
        <AskText>大家在炒什么？来问妙想！</AskText>
        <AskClose><CloseX size={32} c="#e25f15" /></AskClose>
      </AskPill>

      <StockTabs>
        {stockTabs.map((t, i) => <Tab key={t} $fs={42} $on={i === 0} $bar={9}>{t}</Tab>)}
      </StockTabs>

      <Cards>
        <Card $w={538}>
          <CardArt width="275" height="240" viewBox="0 0 275 240">
            <defs>
              <linearGradient id="barG" x1="0" y1="0" x2="0" y2="1">
                <stop offset="0" stopColor="#fbe6e3" />
                <stop offset="1" stopColor="#fff6f4" />
              </linearGradient>
            </defs>
            <path d="M37 82H100L105 24H240L248 95L275 105V195H37Z" fill="#fffaf8" />
            <path d="M76 101H113L110 195H70Z" fill="url(#barG)" />
            <path d="M131 53H213L219 195H127Z" fill="url(#barG)" />
            <path d="M232 125H267L275 195H237Z" fill="url(#barG)" />
            <text x="169" y="145" fontSize="64" fontWeight="700" fill="#fff8f6" textAnchor="middle" fontFamily="Roboto">1</text>
          </CardArt>
          <CardHead>
            <Medal>
              <svg width="34" height="26" viewBox="0 0 34 26">
                <path d="M3 10h7v16H3zM13 2h8v24h-8zM24 13h7v13h-7z" fill="#fff" />
              </svg>
            </Medal>
            人气榜
            <svg width="14" height="28" viewBox="0 0 14 28"><path d="M2 2L12 14L2 26" fill="none" stroke="#bbb" strokeWidth="2.5" /></svg>
          </CardHead>
          <RankLine $mt={18}>A股市场排名第<em>75</em>名</RankLine>
          <RankLine $mt={17}>
            较昨日
            <svg width="24" height="36" viewBox="0 0 24 36"><path d="M12 1L23 15H15V35H9V15H1Z" fill="#d9381e" /></svg>
            <em>59</em>&nbsp;名
          </RankLine>
        </Card>
        <Card $w={540}>
          <CardArt width="263" height="240" viewBox="0 0 263 240">
            <defs>
              <linearGradient id="vsG" x1="0" y1="0" x2="0" y2="1">
                <stop offset="0" stopColor="#fbe6e3" />
                <stop offset="1" stopColor="#fef4f2" />
              </linearGradient>
            </defs>
            <path d="M0 0H263V240H30Z" fill="#fff4f2" opacity=".7" />
            <text x="66" y="142" fontSize="140" fontWeight="900" fontStyle="italic" fill="url(#vsG)" stroke="#fffaf8" strokeWidth="24" paintOrder="stroke" fontFamily="Roboto">VS</text>
          </CardArt>
          <CardHead>
            <Medal>VS</Medal>
            多空看盘
          </CardHead>
          <Vote>
            <VoteSide $up>
              <VoteKnob>
                <svg width="28" height="20" viewBox="0 0 28 20"><path d="M14 3L25 17H3Z" fill="#e0401c" stroke="#e0401c" strokeWidth="4" strokeLinejoin="round" /></svg>
              </VoteKnob>
              <VoteText $up>看涨<small>**%</small></VoteText>
            </VoteSide>
            <VoteSide>
              <VoteKnob>
                <svg width="24" height="20" viewBox="0 0 24 20"><path d="M2 3H22L12 17Z" fill="#3cab60" stroke="#3cab60" strokeWidth="3" strokeLinejoin="round" /></svg>
              </VoteKnob>
              <VoteText>看跌<small>**%</small></VoteText>
            </VoteSide>
          </Vote>
        </Card>
      </Cards>

      <BottomBar>
        <Market>
          <Caret $w={22} $h={12} $c="#777" $up />
          <Num $fs={42} $c={GREEN} $sx={.91} style={{ transformOrigin: 'center', lineHeight: '56px', marginTop: 3 }}>4003.17</Num>
          <MarketRow>
            <span>上证</span>
            <Num $fs={40} $c={GREEN} $sx={1}>-0.38%</Num>
          </MarketRow>
        </Market>
        <NavItem>
          <svg width="66" height="60" viewBox="0 0 66 60">
            <path d="M10 18A28 28 0 0 0 42 57M36 2A28 28 0 0 1 58 44" fill="none" stroke="#666" strokeWidth="3" />
            <path d="M2 16l8-4 0 10M64 40l-6 8-2-8" fill="#666" />
            <text x="33" y="41" fontSize="32" textAnchor="middle" fill="#666" fontFamily="Roboto">¥</text>
          </svg>
          <span>交易</span>
        </NavItem>
        <NavItem>
          <svg width="60" height="60" viewBox="0 0 60 60">
            <path d="M38 3H10Q4 3 4 9V50Q4 56 10 56H48Q54 56 54 50V20" fill="none" stroke="#666" strokeWidth="3.5" />
            <path d="M52 2L57 5L34 41L26 46L28 38Z" fill="#666" />
          </svg>
          <span>发帖</span>
        </NavItem>
        <NavItem>
          <svg width="60" height="60" viewBox="0 0 60 60">
            <g fill="none" stroke="#666" strokeWidth="3.5">
              <rect x="4" y="5" width="22" height="22" rx="3" />
              <path d="M44 2L57 17L44 32L32 17Z" />
              <rect x="4" y="36" width="22" height="22" rx="3" />
              <rect x="34" y="36" width="22" height="22" rx="3" />
            </g>
          </svg>
          <span>功能</span>
        </NavItem>
        <NavItem>
          <svg width="60" height="60" viewBox="0 0 60 60">
            <circle cx="30" cy="30" r="27" fill="none" stroke="#666" strokeWidth="3" />
            <path d="M19 30h3M29 30h3M39 30h3" stroke="#666" strokeWidth="4" />
          </svg>
          <span>设自选</span>
        </NavItem>
      </BottomBar>

      <SysNav>
        <svg width="600" height="44" viewBox="0 0 600 44">
          <path d="M3 5h36M3 22h36M3 39h36" stroke="#808080" strokeWidth="6" strokeLinecap="round" />
          <rect x="267" y="3" width="40" height="38" rx="8" fill="none" stroke="#808080" strokeWidth="5" />
          <path d="M565 2L542 22L565 42" fill="none" stroke="#808080" strokeWidth="5" strokeLinejoin="round" />
        </svg>
      </SysNav>
    </Page>
  );
}
